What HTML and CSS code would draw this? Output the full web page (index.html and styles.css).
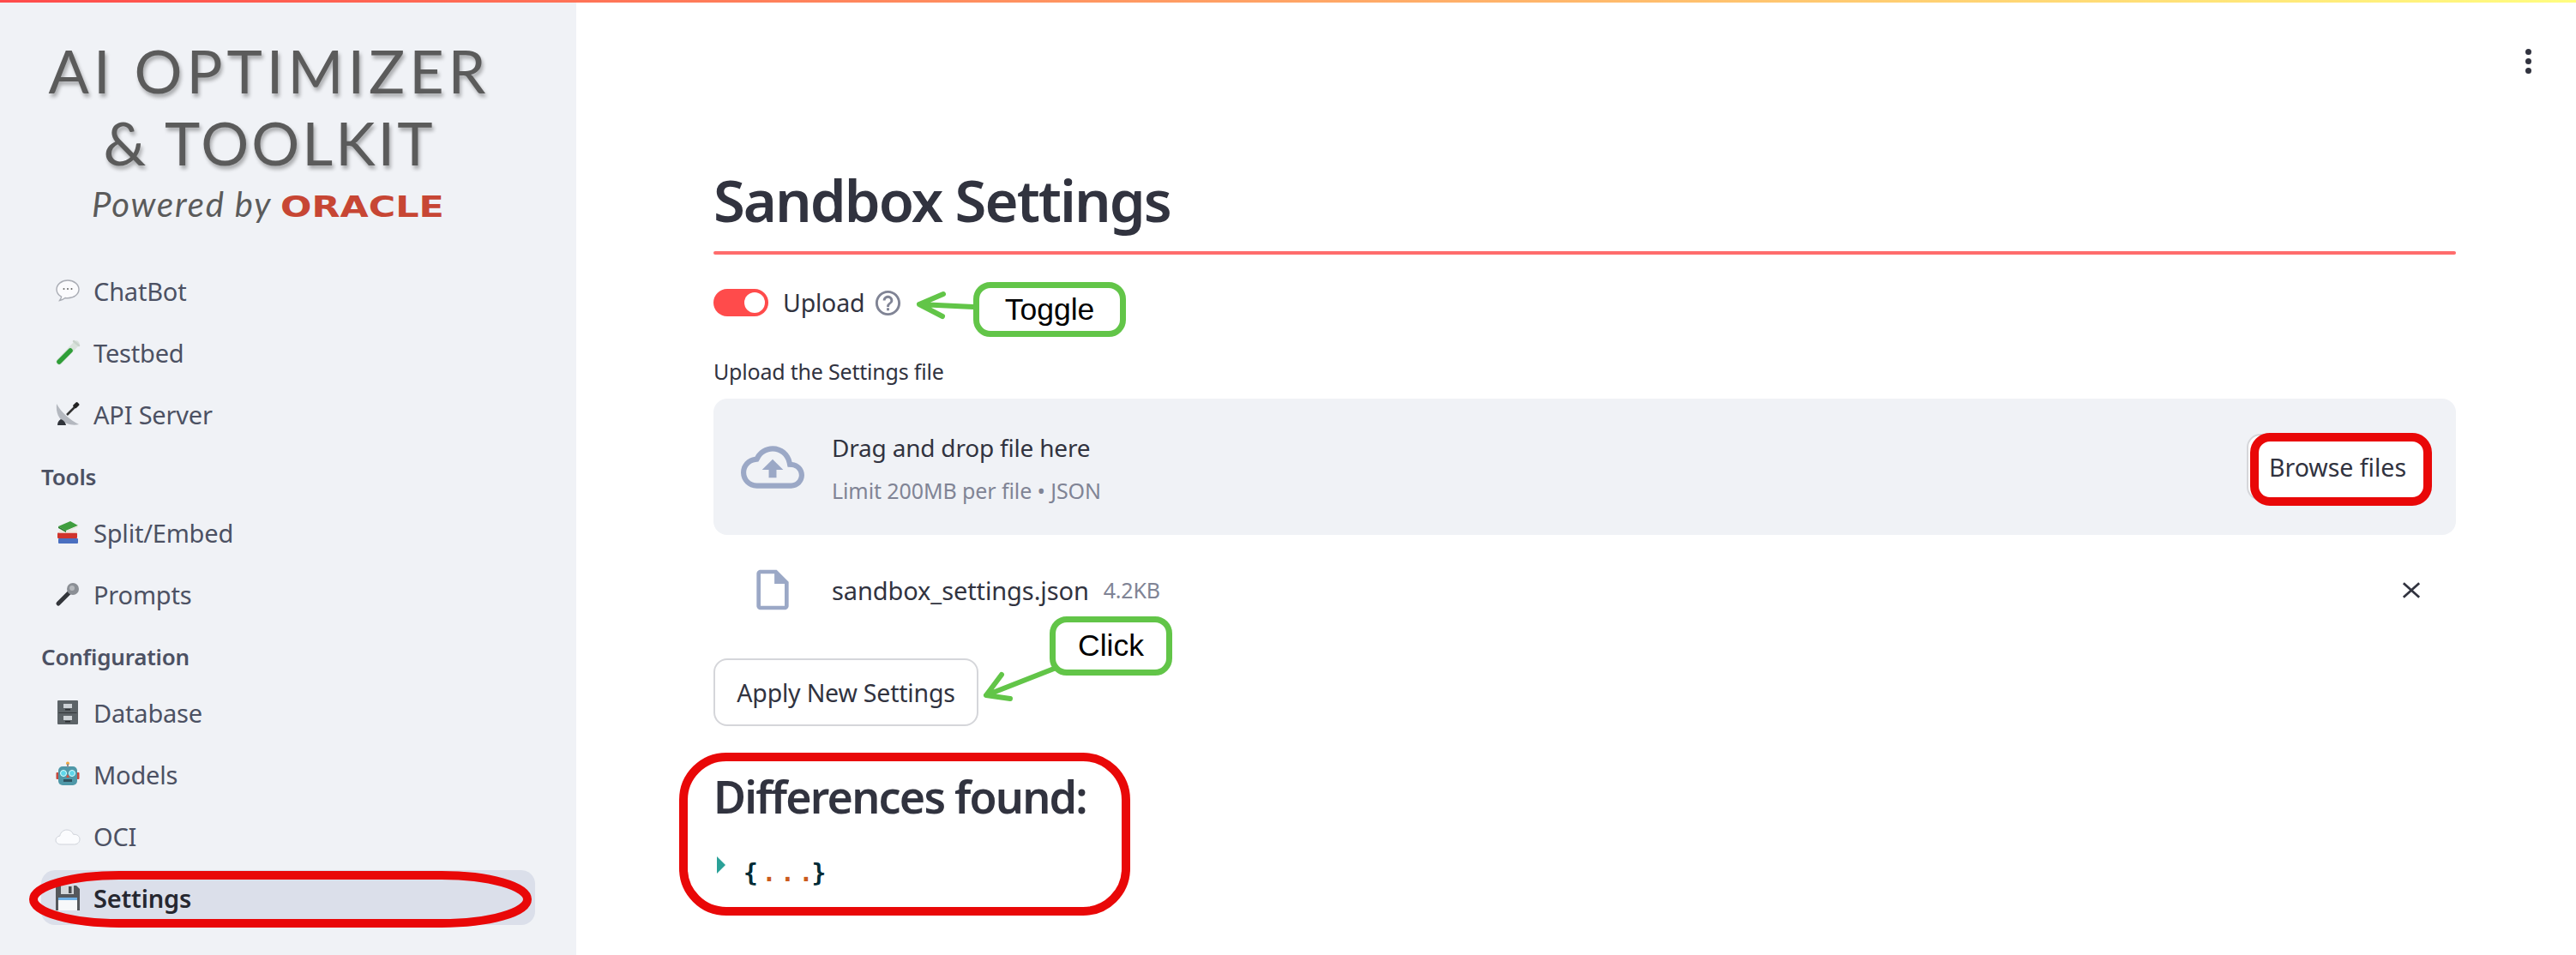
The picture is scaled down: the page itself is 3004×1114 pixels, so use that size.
FILE: index.html
```html
<!DOCTYPE html>
<html lang="en">
<head>
<meta charset="utf-8">
<title>Sandbox Settings</title>
<link rel="stylesheet" href="styles.css">
</head>
<body>
<div class="topbar"></div>
<div class="app">
  <aside class="sidebar">
    <div class="logo">
      <div class="logo-line logo-line-a">AI OPTIMIZER</div>
      <div class="logo-line logo-line-b">&amp; TOOLKIT</div>
      <div class="logo-sub"><span class="powered">Powered by</span><span class="oracle">ORACLE</span></div>
    </div>
    <nav class="nav">
      <a class="nav-row"><svg class="emoji" viewBox="0 0 30 30"><path d="M15 3C7.800 3 2 7.800 2 13.500c0 3.600 2.200 6.700 5.600 8.600-.2 1.600-1 3-2 4.400 2.600-.5 4.800-1.600 6.400-3 1 .2 2 .2 3 .2 7.200 0 13-4.600 13-10.200S22.200 3 15 3z" fill="#fbfbfd" stroke="#a9acb4" stroke-width="1.400"/><circle cx="10.500" cy="13" r="1" fill="#666"/><circle cx="15" cy="13" r="1" fill="#666"/><circle cx="19.500" cy="13" r="1" fill="#666"/></svg><span>ChatBot</span></a>
      <a class="nav-row"><svg class="emoji" viewBox="0 0 30 30"><path d="M25 5 5 26" stroke="#d9e2dc" stroke-width="7" stroke-linecap="round"/><path d="M18 13 5 26" stroke="#2f9e38" stroke-width="5.500" stroke-linecap="round"/><path d="M22 2l6 5" stroke="#c9d3cc" stroke-width="2.500" stroke-linecap="round"/></svg><span>Testbed</span></a>
      <a class="nav-row"><svg class="emoji" viewBox="0 0 30 30"><path d="M2 3c-1 10 2 19 12 23 5 2 10 2 14 1C18 22 8 14 2 3z" fill="#b4b8bf"/><path d="M14 16 25 5" stroke="#333" stroke-width="2.500"/><rect x="22" y="1" width="5" height="7" rx="1.500" fill="#222" transform="rotate(45 24.500 5)"/><path d="M3 28c0-4 2-6 4-7 3 1 5 3 6 7z" fill="#30343a"/></svg><span>API Server</span></a>
      <div class="nav-section">Tools</div>
      <a class="nav-row"><svg class="emoji" viewBox="0 0 30 30"><rect x="4" y="22" width="23" height="6" rx="1" fill="#4a6fc0"/><rect x="3" y="15.500" width="23" height="6.500" rx="1" fill="#d0342c"/><path d="M5 15.500h21v-3H5z" fill="#efe9dc"/><path d="M4 8 18 2l9 5-14 6z" fill="#3f9e3f"/><path d="M4 8l9 5v2L4 10z" fill="#2b7f2f"/><path d="M13 13l14-6v2l-14 6z" fill="#e8e8e0"/></svg><span>Split/Embed</span></a>
      <a class="nav-row"><svg class="emoji" viewBox="0 0 30 30"><path d="M17 13 4 26" stroke="#33363b" stroke-width="5" stroke-linecap="round"/><circle cx="21" cy="9" r="7" fill="#8b8f95"/><circle cx="20" cy="8" r="3" fill="#b5b8bc"/></svg><span>Prompts</span></a>
      <div class="nav-section">Configuration</div>
      <a class="nav-row"><svg class="emoji" viewBox="0 0 30 30"><rect x="3" y="1" width="24" height="28" rx="1" fill="#5c6367"/><rect x="4.500" y="15" width="21" height="1" fill="#34383b"/><rect x="10" y="5" width="10" height="5" fill="#cdd2d6"/><rect x="10" y="19" width="10" height="5" fill="#cdd2d6"/><rect x="12" y="11" width="6" height="1.500" fill="#2a2d30"/><rect x="12" y="25" width="6" height="1.500" fill="#2a2d30"/></svg><span>Database</span></a>
      <a class="nav-row"><svg class="emoji" viewBox="0 0 30 30"><rect x="1.500" y="13" width="3" height="8" rx="1" fill="#c5483c"/><rect x="25.500" y="13" width="3" height="8" rx="1" fill="#c5483c"/><rect x="4" y="6" width="22" height="22" rx="5" fill="#4f98a8"/><circle cx="15" cy="2.500" r="2" fill="#f0a63c"/><rect x="14" y="3" width="2" height="4" fill="#8b8f95"/><circle cx="10" cy="14" r="3.500" fill="#5fd6ea" stroke="#dff" stroke-width="1"/><circle cx="20" cy="14" r="3.500" fill="#5fd6ea" stroke="#dff" stroke-width="1"/><path d="M15 15l2 4h-4z" fill="#d9503f"/><rect x="10" y="21" width="10" height="3" fill="#2f5360"/></svg><span>Models</span></a>
      <a class="nav-row"><svg class="emoji" viewBox="0 0 30 30"><path d="M7 25c-3.500 0-6-2.200-6-5 0-2.600 2-4.600 4.800-4.900C6.400 11 10 8 14 8c3.600 0 6.500 2.200 7.500 5.300 4.200-.4 7.500 2.100 7.500 5.700 0 3.500-2.800 6-6.500 6z" fill="#fbfcfe" stroke="#cfd3da" stroke-width="1"/></svg><span>OCI</span></a>
      <a class="nav-row nav-row-active"><svg class="emoji" viewBox="0 0 30 30"><path d="M1 1h24l4 4v25H1z" fill="#55585c"/><rect x="7" y="1" width="15" height="10" fill="#d4d7da"/><rect x="16" y="2" width="3.500" height="8" fill="#4a4d50"/><rect x="4" y="15" width="22" height="15" fill="#f7f8fa"/><rect x="4" y="15" width="22" height="3" fill="#6fb1e6"/></svg><span>Settings</span></a>
    </nav>
  </aside>
  <main class="main">
    <div class="toolbar"><span class="kebab"><i></i><i></i><i></i></span></div>
    <div class="content">
      <h1 class="title">Sandbox Settings</h1>
      <div class="divider"></div>
      <div class="toggle-row">
        <span class="toggle"><span class="knob"></span></span>
        <span class="toggle-label">Upload</span>
        <svg class="help" viewBox="0 0 24 24"><path d="M11 18h2v-2h-2v2zm1-16C6.480 2 2 6.480 2 12s4.480 10 10 10 10-4.480 10-10S17.520 2 12 2zm0 18c-4.410 0-8-3.590-8-8s3.590-8 8-8 8 3.590 8 8-3.590 8-8 8zm0-14c-2.210 0-4 1.790-4 4h2c0-1.100.9-2 2-2s2 .9 2 2c0 2-3 1.750-3 5h2c0-2.250 3-2.500 3-5 0-2.210-1.790-4-4-4z"/></svg>
      </div>
      <div class="field-label">Upload the Settings file</div>
      <section class="dropzone">
        <svg class="cloud" viewBox="0 0 24 24"><path d="M19.350 10.040C18.670 6.590 15.640 4 12 4 9.110 4 6.600 5.640 5.350 8.040 2.340 8.360 0 10.910 0 14c0 3.310 2.690 6 6 6h13c2.760 0 5-2.240 5-5 0-2.640-2.050-4.780-4.650-4.960zM19 18H6c-2.210 0-4-1.790-4-4 0-2.050 1.530-3.760 3.560-3.970l1.070-.11.5-.95C8.080 7.140 9.940 6 12 6c2.620 0 4.880 1.860 5.390 4.430l.3 1.500 1.530.11c1.560.1 2.780 1.410 2.780 2.960 0 1.650-1.350 3-3 3zM8 13h2.550v3h2.900v-3H16l-4-4z"/></svg>
        <div class="drop-text">
          <div class="drop-main">Drag and drop file here</div>
          <div class="drop-sub">Limit 200MB per file • JSON</div>
        </div>
        <button class="btn btn-browse">Browse files</button>
      </section>
      <div class="file-row">
        <svg class="file-icon" viewBox="0 0 24 24"><path d="M14 2H6c-1.100 0-1.990.9-1.990 2L4 20c0 1.100.89 2 1.990 2H18c1.100 0 2-.9 2-2V8l-6-6zM6 20V4h7v5h5v11H6z"/><path d="M13 3v6h6z"/></svg>
        <span class="file-name">sandbox_settings.json</span>
        <span class="file-size">4.2KB</span>
        <svg class="file-x" viewBox="0 0 24 24"><path d="M2 3l20 18M22 3 2 21"/></svg>
      </div>
      <button class="btn btn-apply">Apply New Settings</button>
      <h2 class="subhead">Differences found:</h2>
      <div class="json"><span class="json-caret"></span><span class="json-brace">{</span><span class="json-dot">.</span><span class="json-dot">.</span><span class="json-dot json-dot-last">.</span><span class="json-brace">}</span></div>
    </div>
  </main>
</div>
<svg class="marks" viewBox="0 0 3004 1114" width="3004" height="1114">
  <rect class="mark-red" x="39" y="1021" width="576" height="56" rx="100" ry="28"/>
  <rect class="mark-red" x="2629" y="510" width="202" height="75" rx="18"/>
  <rect class="mark-red" x="797" y="883" width="516" height="180" rx="50"/>
  <path class="mark-green" d="M1135 358 1072 355M1100 343 1072 355 1099 369"/>
  <path class="mark-green" d="M1229 780 1150 811M1168 787 1150 811 1178 815"/>
</svg>
<div class="callout callout-toggle">Toggle</div>
<div class="callout callout-click">Click</div>
</body>
</html>
```
FILE: styles.css
```css
* { box-sizing: border-box; }
html, body { margin: 0; height: 1114px; overflow: hidden; background: #fff; }
body { font-family: "Noto Sans", "Open Sans", sans-serif; color: #31333f; position: relative; }
.topbar { height: 3px; background: linear-gradient(90deg, #ff4b4b, #fffd80); }
.app { display: flex; height: 1111px; }
.sidebar { width: 672px; flex: none; background: #f0f2f6; padding: 0 48px; }
.logo { height: 304px; padding-top: 37px; width: 532px; display: flex; flex-direction: column; align-items: center; color: #5b5b5b; font-family: Lato, sans-serif; }
.logo-line { font-size: 70px; line-height: 84px; height: 84px; text-shadow: 2px 4px 4px rgba(0,0,0,.3); white-space: nowrap; }
.logo-line-a { letter-spacing: 5px; }
.logo-line-b { letter-spacing: 3px; }
.logo-sub { display: flex; align-items: baseline; margin-top: 7px; }
.powered { width: 220px; font-size: 40px; line-height: 46px; font-style: italic; color: #5b5b5b; letter-spacing: 1.800px; white-space: nowrap; }
.oracle { display: block; width: 194px; font-family: "DejaVu Sans", sans-serif; font-size: 33px; font-weight: 700; color: #c74634; transform: scaleX(1.3); transform-origin: left center; white-space: nowrap; }
.nav { display: flex; flex-direction: column; gap: 8px; }
.nav-row { height: 64px; display: flex; align-items: center; gap: 15px; padding-left: 16px; border-radius: 16px; font-size: 29px; letter-spacing: -.2px; color: #4c5163; }
.nav-row-active { background: #dbdfea; color: #262730; font-weight: 600; }
.emoji { width: 30px; height: 30px; flex: none; fill: none; }
.nav-section { height: 58px; padding: 16px 0 0; font-size: 26px; line-height: 34px; font-weight: 600; color: #4c5163; letter-spacing: -.2px; }
.main { flex: 1; min-width: 0; }
.toolbar { height: 187px; display: flex; justify-content: flex-end; padding: 54px 52px 0 0; }
.kebab { display: flex; flex-direction: column; gap: 4px; }
.kebab i { display: block; width: 7px; height: 7px; border-radius: 50%; background: #31333f; }
.content { margin: 0 140px 0 160px; }
.title { margin: -5px 0 12px; font-size: 67px; line-height: 96px; height: 96px; font-weight: 600; color: #31333f; letter-spacing: -2px; }
.divider { height: 4px; border-radius: 2px; background: #ff6c6c; }
.toggle-row { display: flex; align-items: center; margin-top: 40px; height: 32px; }
.toggle { width: 64px; height: 32px; border-radius: 16px; background: #ff4b4b; display: flex; align-items: center; justify-content: flex-end; padding-right: 4px; }
.knob { width: 24px; height: 24px; border-radius: 50%; background: #fff; }
.toggle-label { margin-left: 17px; font-size: 28.500px; letter-spacing: -.2px; }
.help { width: 35px; height: 35px; margin-left: 10px; fill: #808495; }
.field-label { margin-top: 48px; height: 32px; line-height: 32px; font-size: 25px; letter-spacing: -.2px; margin-bottom: 16px; }
.dropzone { height: 159px; border-radius: 16px; background: #f0f2f6; display: flex; align-items: center; padding: 0 32px; }
.cloud { width: 74px; height: 74px; flex: none; fill: #9ba8c6; }
.drop-text { margin-left: 32px; flex: 1; }
.drop-main { font-size: 28px; line-height: 40px; letter-spacing: -.2px; }
.drop-sub { font-size: 25px; line-height: 32px; margin-top: 14px; color: #808495; letter-spacing: -.1px; }
.btn { font-family: inherit; color: #31333f; background: #fff; border: 2px solid #d5d6da; border-radius: 16px; display: inline-flex; align-items: center; justify-content: center; padding: 0; }
.btn-browse { width: 212px; height: 78px; font-size: 28.500px; }
.file-row { margin-top: 32px; height: 64px; display: flex; align-items: center; padding-left: 41px; }
.file-icon { width: 56px; height: 56px; flex: none; fill: #9ba8c6; }
.file-name { margin-left: 41px; font-size: 29px; letter-spacing: -.1px; }
.file-size { margin-left: 17px; font-size: 25px; color: #808495; letter-spacing: -.2px; }
.file-x { width: 22px; height: 23px; margin-left: auto; margin-right: 41px; fill: none; stroke: #31333f; stroke-width: 3; }
.btn-apply { margin-top: 48px; width: 309px; height: 79px; font-size: 28.500px; letter-spacing: -.2px; display: flex; }
.subhead { margin: 38px 0 0; height: 88px; line-height: 88px; font-size: 52px; font-weight: 600; letter-spacing: -1.800px; }
.json { margin-top: 30px; height: 30px; display: flex; align-items: center; font-family: "DejaVu Sans Mono", "Liberation Mono", monospace; font-size: 28px; font-weight: 700; }
.json-caret { width: 0; height: 0; border-left: 10px solid #2aa198; border-top: 10px solid transparent; border-bottom: 10px solid transparent; margin: -18px 21px 0 4px; }
.json-brace { color: #002b36; width: 21.500px; }
.json-dot { color: #cb5a1c; width: 21.500px; }
.json-dot-last { width: 15px; }
.marks { position: absolute; top: 0; left: 0; pointer-events: none; }
.mark-red { fill: none; stroke: #e90808; stroke-width: 10; }
.mark-green { fill: none; stroke: #62c548; stroke-width: 6; stroke-linecap: round; stroke-linejoin: round; }
.callout { position: absolute; display: flex; align-items: center; justify-content: center; background: #fff; border: 7px solid #62c548; border-radius: 20px; font-family: "Liberation Sans", Arial, sans-serif; font-size: 35.500px; color: #000; }
.callout-toggle { left: 1135px; top: 329px; width: 178px; height: 64px; }
.callout-click { left: 1224px; top: 719px; width: 143px; height: 69px; }
```
